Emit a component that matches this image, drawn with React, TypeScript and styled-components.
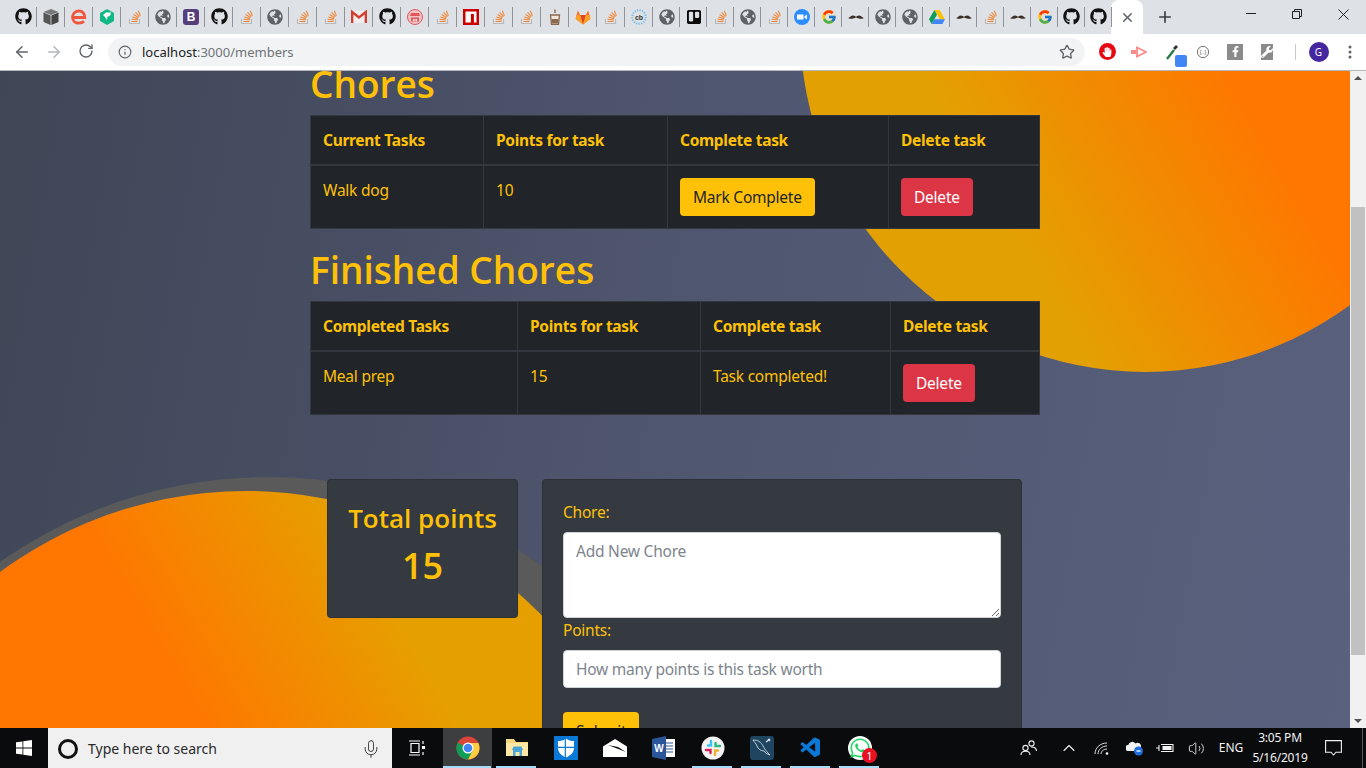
import React from 'react';
import styled, { createGlobalStyle } from 'styled-components';
import {
  ArrowLeft,
  ArrowRight,
  ChevronUp,
  Info,
  Mic,
  Plus,
  RotateCw,
  Star,
  Volume2,
  X,
} from 'lucide-react';
import { FaGithub, FaTrello, FaGlobeAmericas, FaWhatsapp, FaWrench, FaFacebookF, FaHandPaper } from 'react-icons/fa';
import { FcGoogle } from 'react-icons/fc';
import { VscVscode } from 'react-icons/vsc';

const UI_FONT = `"Noto Sans", "Open Sans", sans-serif`;

const GlobalStyle = createGlobalStyle`
  html, body {
    margin: 0;
    padding: 0;
    height: 100%;
    overflow: hidden;
  }
  * {
    box-sizing: border-box;
  }
  body {
    font-family: ${UI_FONT};
    font-size: 16px;
    line-height: 24px;
  }
`;

const Screen = styled.div`
  width: 1366px;
  height: 768px;
  display: flex;
  flex-direction: column;
  overflow: hidden;
`;

/* browser chrome */
const TabStrip = styled.div`
  height: 34px;
  flex: none;
  display: flex;
  background: #dee1e6;
  padding-left: 9px;
`;
const PinnedTab = styled.div<{ $w: number }>`
  width: ${(p) => p.$w}px;
  height: 34px;
  flex: none;
  display: flex;
  align-items: center;
  justify-content: center;
  padding-bottom: 1px;
  position: relative;
  color: #24292e;
  &::after {
    content: '';
    position: absolute;
    right: 0;
    top: 7px;
    height: 20px;
    width: 1px;
    background: #8f9399;
  }
`;
const ActiveTab = styled.div`
  width: 32px;
  height: 34px;
  flex: none;
  margin-left: -1px;
  background: #fff;
  border-radius: 8px 8px 0 0;
  display: flex;
  align-items: center;
  justify-content: center;
  color: #5f6368;
`;
const NewTab = styled.div`
  width: 44px;
  display: flex;
  align-items: center;
  justify-content: center;
  color: #3c4043;
`;
const WindowControls = styled.div`
  margin-left: auto;
  display: flex;
`;
const WindowButton = styled.div`
  width: 46px;
  height: 28px;
  display: flex;
  align-items: center;
  justify-content: center;
  color: #202124;
`;
const Toolbar = styled.div`
  height: 37px;
  flex: none;
  background: #fff;
  border-bottom: 1px solid #b6b7b9;
  display: flex;
  align-items: center;
  padding-bottom: 1px;
`;
const NavButton = styled.div<{ $muted?: boolean }>`
  width: 32px;
  display: flex;
  justify-content: center;
  color: ${(p) => (p.$muted ? '#b4b6b9' : '#5f6368')};
`;
const NavGroup = styled.div`
  width: 108px;
  padding-left: 6px;
  display: flex;
  flex: none;
`;
const Omnibox = styled.div`
  width: 977px;
  height: 28px;
  flex: none;
  border-radius: 14px;
  background: #f1f3f4;
  display: flex;
  align-items: center;
  padding: 0 10px;
  color: #5f6368;
  font-size: 13px;
`;
const UrlText = styled.span`
  margin-left: 10px;
  color: #6f7478;
  b {
    font-weight: 400;
    color: #202124;
  }
`;
const StarSlot = styled.div`
  margin-left: auto;
  display: flex;
`;
const Extensions = styled.div`
  flex: 1;
  display: flex;
  align-items: center;
`;
const Extension = styled.div<{ $w: number }>`
  width: ${(p) => p.$w}px;
  flex: none;
  display: flex;
  justify-content: center;
  align-items: center;
  position: relative;
`;
const ExtDivider = styled.div`
  width: 1px;
  height: 16px;
  background: #c8c9cb;
  flex: none;
`;
const ProfileBadge = styled.div`
  width: 20px;
  height: 20px;
  border-radius: 50%;
  background: #4527a0;
  color: #fff;
  font-size: 10px;
  line-height: 20px;
  text-align: center;
`;
const Dot = styled.span`
  position: absolute;
  right: 10px;
  bottom: -6px;
  width: 12px;
  height: 12px;
  border-radius: 2px;
  background: #4285f4;
`;
const RoundStop = styled.div`
  width: 17px;
  height: 17px;
  border-radius: 50%;
  background: #e50914;
  color: #fff;
  display: flex;
  align-items: center;
  justify-content: center;
`;
const GreySquare = styled.div`
  width: 16px;
  height: 16px;
  background: #8a8a8a;
  color: #fff;
  display: flex;
  align-items: center;
  justify-content: center;
`;

/* page */
const Viewport = styled.div`
  flex: 1;
  min-height: 0;
  display: flex;
`;
const Page = styled.div`
  flex: 1;
  position: relative;
  overflow: hidden;
  background: linear-gradient(100deg, #3f4656 0%, #4f566f 50%, #5a617e 100%);
`;
const Disc = styled.div`
  position: absolute;
  border-radius: 50%;
`;
const SunDisc = styled(Disc)`
  left: 800px;
  top: -390px;
  width: 691px;
  height: 691px;
  background: linear-gradient(60deg, #e3a002 27%, #ff7600 56%);
`;
const RingDisc = styled(Disc)`
  left: -197px;
  top: 406px;
  width: 930px;
  height: 930px;
  background: #5a5a5a;
`;
const OrangeDisc = styled(Disc)`
  left: -168px;
  top: 420px;
  width: 828px;
  height: 828px;
  background: linear-gradient(60deg, #ff7600 54%, #e5a000 75%);
`;
const Main = styled.main`
  position: relative;
  width: 730px;
  margin: -12px auto 0;
  font-size: 15.5px;
  letter-spacing: -0.23px;
`;
const Heading = styled.h1`
  margin: 0 0 8px;
  padding-top: 2px;
  font-family: 'Open Sans', sans-serif;
  font-size: 37px;
  line-height: 46px;
  font-weight: 600;
  letter-spacing: 0;
  color: #ffc107;
`;
const ChoreTable = styled.table`
  width: 729px;
  border-collapse: collapse;
  table-layout: fixed;
  background: #212529;
  color: #ffc107;
  margin-bottom: 16px;
  th,
  td {
    padding: 12px;
    border: 1px solid #32383e;
    text-align: left;
    vertical-align: top;
  }
  th {
    font-weight: 700;
    letter-spacing: -0.3px;
    vertical-align: bottom;
    border-bottom-width: 2px;
  }
`;
const Btn = styled.button<{ $kind: 'warning' | 'danger' }>`
  display: inline-block;
  height: 38px;
  padding: 6px 12px;
  border: 1px solid transparent;
  border-radius: 4px;
  font: inherit;
  letter-spacing: inherit;
  background: ${(p) => (p.$kind === 'warning' ? '#ffc107' : '#dc3545')};
  color: ${(p) => (p.$kind === 'warning' ? '#212529' : '#fff')};
`;
const CardRow = styled.div`
  margin-top: 64px;
  padding-right: 1px;
  display: flex;
  justify-content: center;
  align-items: flex-start;
  gap: 24px;
`;
const Card = styled.div`
  background: #343a40;
  border: 1px solid rgba(0, 0, 0, 0.125);
  border-radius: 4px;
  padding: 20px;
  color: #ffc107;
`;
const PointsCard = styled(Card)`
  width: 191px;
  height: 139px;
  text-align: center;
`;
const PointsTitle = styled.h3`
  margin: 0 0 8px;
  padding-top: 2px;
  font-family: 'Open Sans', sans-serif;
  font-size: 26px;
  line-height: 32px;
  font-weight: 600;
  letter-spacing: 0;
  white-space: nowrap;
`;
const PointsValue = styled.h1`
  margin: 0;
  font-family: 'Open Sans', sans-serif;
  font-size: 36px;
  line-height: 48px;
  font-weight: 600;
  letter-spacing: 0;
`;
const FormCard = styled(Card)`
  width: 480px;
  height: 400px;
`;
const FieldLabel = styled.label`
  display: block;
  margin-bottom: 8px;
`;
const ChoreArea = styled.textarea`
  display: block;
  width: 100%;
  height: 86px;
  padding: 6px 12px;
  border: 1px solid #ced4da;
  border-radius: 4px;
  font: inherit;
  letter-spacing: inherit;
  background: #fff;
  &::placeholder {
    color: #7d858d;
    opacity: 1;
  }
`;
const PointsInput = styled.input`
  display: block;
  width: 100%;
  height: 38px;
  padding: 6px 12px;
  border: 1px solid #ced4da;
  border-radius: 4px;
  font: inherit;
  letter-spacing: inherit;
  background: #fff;
  margin-bottom: 24px;
  &::placeholder {
    color: #7d858d;
    opacity: 1;
  }
`;

const Scrollbar = styled.div`
  width: 16px;
  flex: none;
  background: #f1f1f1;
  position: relative;
`;
const ScrollThumb = styled.div`
  position: absolute;
  left: 1px;
  right: 1px;
  top: 136px;
  height: 448px;
  background: #c1c1c1;
`;
const ScrollArrow = styled.div<{ $down?: boolean }>`
  position: absolute;
  left: 4px;
  ${(p) => (p.$down ? 'bottom: 5px;' : 'top: 5px;')}
  width: 0;
  height: 0;
  border-left: 4px solid transparent;
  border-right: 4px solid transparent;
  ${(p) => (p.$down ? 'border-top: 4px solid #505050;' : 'border-bottom: 4px solid #505050;')}
`;

/* windows taskbar */
const Taskbar = styled.div`
  height: 40px;
  flex: none;
  display: flex;
  background: #0a0b0d;
  color: #fff;
`;
const StartButton = styled.div`
  width: 48px;
  display: flex;
  align-items: center;
  justify-content: center;
`;
const SearchBox = styled.div`
  width: 344px;
  background: #f0f0f0;
  color: #2a2a2a;
  display: flex;
  align-items: center;
  font-size: 14px;
  padding: 1px 10px 0;
`;
const Cortana = styled.div`
  width: 20px;
  height: 20px;
  border-radius: 50%;
  border: 3px solid #111;
  margin-right: 10px;
`;
const MicSlot = styled.div`
  margin-left: auto;
  margin-right: 1px;
  display: flex;
  color: #333;
`;
const TaskView = styled.div`
  width: 51px;
  display: flex;
  align-items: center;
  justify-content: center;
`;
const AppCell = styled.div<{ $active?: boolean; $running?: boolean }>`
  width: 49px;
  display: flex;
  align-items: center;
  justify-content: center;
  position: relative;
  background: ${(p) => (p.$active ? '#3d3e40' : 'transparent')};
  &::after {
    content: '';
    position: absolute;
    left: ${(p) => (p.$active ? '0' : '4px')};
    right: ${(p) => (p.$active ? '1px' : '5px')};
    bottom: 0;
    height: 2px;
    background: ${(p) => (p.$running ? '#a6dcfa' : 'transparent')};
  }
`;
const WhatsAppTile = styled.div`
  width: 24px;
  height: 24px;
  border-radius: 50%;
  background: #fff;
  color: #25d366;
  display: flex;
  align-items: center;
  justify-content: center;
`;
const Badge = styled.span`
  position: absolute;
  right: 7px;
  bottom: 5px;
  width: 15px;
  height: 15px;
  border-radius: 50%;
  background: #e81123;
  color: #fff;
  font-size: 11px;
  line-height: 15px;
  text-align: center;
`;
const Tray = styled.div`
  margin-left: auto;
  display: flex;
`;
const TrayItem = styled.div<{ $w: number }>`
  width: ${(p) => p.$w}px;
  display: flex;
  align-items: center;
  justify-content: center;
  font-size: 12px;
  color: #f2f2f2;
`;
const Clock = styled.div`
  text-align: center;
  line-height: 20px;
  font-size: 12px;
  letter-spacing: -0.2px;
`;
const ShowDesktop = styled.div`
  width: 14px;
  position: relative;
  &::after {
    content: '';
    position: absolute;
    left: 10px;
    top: 0;
    bottom: 0;
    width: 1px;
    background: #5a5a5a;
  }
`;

/* favicons */
const StackIcon = () => (
  <svg width="16" height="16" viewBox="0 0 16 16" fill="none">
    <path d="M2.500 10v4.500h10V10" stroke="#bcbbbb" strokeWidth="1.200" />
    <path
      d="M4.500 12.500h6M4.700 10.300l5.900.6M5.300 8l5.700 1.600M6.600 5.600l5 2.900M8.600 3.400l3.900 4.200M11.200 1.600l2.200 5.200"
      stroke="#f0893a"
      strokeWidth="1.100"
    />
  </svg>
);
const CubeIcon = () => (
  <svg width="16" height="16" viewBox="0 0 16 16">
    <path d="M8 0l7.500 3L8 6 .5 3z" fill="#777" />
    <path d="M.5 3.600L7.600 6.600V16L.5 13z" fill="#555" />
    <path d="M15.500 3.600L8.400 6.600V16l7.100-3z" fill="#444" />
  </svg>
);
const EIcon = () => (
  <svg width="16" height="16" viewBox="0 0 16 16" fill="none">
    <path d="M1.500 8.500h12.300C13.800 4.500 11.300 2 8 2 4.500 2 1.500 4.500 1.500 8.200c0 3.700 2.900 6 6.500 6 2 0 3.800-.7 5-1.900" stroke="#f1553b" strokeWidth="2.800" />
  </svg>
);
const HexIcon = () => (
  <svg width="16" height="16" viewBox="0 0 16 16">
    <path d="M8 0l7 4v8l-7 4-7-4V4z" fill="#12b886" />
    <path d="M4 6l3-2.500h5L11 7 8.500 7.500 8 11 6 8z" fill="#fff" />
  </svg>
);
const BootstrapTile = styled.div`
  width: 16px;
  height: 16px;
  border-radius: 3px;
  background: #563d7c;
  color: #fff;
  font: 700 12px/16px 'Liberation Sans', sans-serif;
  text-align: center;
`;
const GmailIcon = () => (
  <svg width="16" height="16" viewBox="0 0 16 16" fill="none">
    <path d="M0 2h16v12H0z" fill="#eee" />
    <path d="M1.200 14V3L8 8.500 14.800 3v11" stroke="#d23f31" strokeWidth="2.400" />
  </svg>
);
const TempleIcon = () => (
  <svg width="16" height="16" viewBox="0 0 16 16" fill="none">
    <circle cx="8" cy="8" r="7.500" fill="#f2c4c4" stroke="#e0575c" />
    <path d="M4 4h8l1 3H3zM4 8.500h8v4H4z" fill="#e0575c" />
    <path d="M6 10h1.500v2H6zM8.500 10H10v2H8.500z" fill="#fff" />
  </svg>
);
const NpmIcon = () => (
  <svg width="16" height="16" viewBox="0 0 16 16">
    <path d="M0 0h16v16H0z" fill="#cb0000" />
    <path d="M2.500 2.500h11v11h-2.600V5h-3v8.500H2.500z" fill="#fff" />
  </svg>
);
const CupIcon = () => (
  <svg width="16" height="16" viewBox="0 0 16 16" fill="none">
    <path d="M3.500 6h9l-1 9.500h-7z" fill="#f3e6d8" stroke="#8a6a50" strokeWidth="1.300" />
    <path d="M4.500 10h7l-.5 4.500H5z" fill="#8a6a50" />
    <path d="M8 .5v3.500" stroke="#8a6a50" strokeWidth="1.400" />
  </svg>
);
const GitlabIcon = () => (
  <svg width="16" height="16" viewBox="0 0 16 16">
    <path d="M8 15.500L.5 9.800 2.800 1.500 5.200 6h5.600l2.400-4.500 2.300 8.300z" fill="#fc6d26" />
    <path d="M8 15.500L5.200 6h5.600z" fill="#e24329" />
    <path d="M.5 9.800L8 15.500 5.200 6H2z" fill="#fca326" />
    <path d="M15.500 9.800L8 15.500 10.800 6H14z" fill="#fca326" />
  </svg>
);
const CbIcon = () => (
  <svg width="16" height="16" viewBox="0 0 16 16" fill="none">
    <circle cx="8" cy="8" r="6.800" stroke="#57b5ea" strokeWidth="2" strokeDasharray="1 1.500" />
    <text x="8" y="10.500" fontSize="7" fontWeight="700" textAnchor="middle" fill="#333" fontFamily="Liberation Sans">cb</text>
  </svg>
);
const ZoomIcon = () => (
  <svg width="16" height="16" viewBox="0 0 16 16">
    <circle cx="8" cy="8" r="8" fill="#2d8cff" />
    <path d="M3 5.500h6.500v5H3zM10.300 7.500l2.700-2v5l-2.700-2z" fill="#fff" />
  </svg>
);
const MustacheIcon = () => (
  <svg width="16" height="16" viewBox="0 0 16 16">
    <path d="M0 9c2-.5 3-2.500 5-2.500 1.400 0 2.300.8 3 1.300.7-.5 1.600-1.300 3-1.300 2 0 3 2 5 2.500-2 1-3.500 1-5 .6-1.300-.4-2.300-.9-3-1.100-.7.2-1.700.7-3 1.100-1.500.4-3 .4-5-.6z" fill="#3b2f25" />
  </svg>
);
const DriveIcon = () => (
  <svg width="16" height="16" viewBox="0 0 16 16">
    <path d="M5.400 1h5.200l5.400 9.300h-5.200z" fill="#ffc107" />
    <path d="M5.400 1L0 10.300l2.600 4.700L8 5.700z" fill="#0f9d58" />
    <path d="M2.600 15h10.800l2.600-4.700H5.300z" fill="#4285f4" />
  </svg>
);

type Favicon = 'gh' | 'so' | 'globe' | 'cube' | 'e' | 'hex' | 'bs' | 'gmail' | 'temple' | 'npm' | 'cup' | 'gitlab' | 'cb' | 'trello' | 'zoom' | 'google' | 'stache' | 'drive';

const favicons: Favicon[] = [
  'gh', 'cube', 'e', 'hex', 'so', 'globe', 'bs', 'gh', 'so', 'globe',
  'so', 'so', 'gmail', 'gh', 'temple', 'so', 'npm', 'so', 'so', 'cup',
  'gitlab', 'so', 'cb', 'globe', 'trello', 'so', 'globe', 'so', 'zoom', 'google',
  'stache', 'globe', 'globe', 'drive', 'stache', 'so', 'stache', 'google', 'gh', 'gh',
];

function renderFavicon(kind: Favicon) {
  switch (kind) {
    case 'gh':
      return <FaGithub size={17} color="#111" />;
    case 'so':
      return <StackIcon />;
    case 'globe':
      return <FaGlobeAmericas size={16} color="#5f6368" />;
    case 'cube':
      return <CubeIcon />;
    case 'e':
      return <EIcon />;
    case 'hex':
      return <HexIcon />;
    case 'bs':
      return <BootstrapTile>B</BootstrapTile>;
    case 'gmail':
      return <GmailIcon />;
    case 'temple':
      return <TempleIcon />;
    case 'npm':
      return <NpmIcon />;
    case 'cup':
      return <CupIcon />;
    case 'gitlab':
      return <GitlabIcon />;
    case 'cb':
      return <CbIcon />;
    case 'trello':
      return <FaTrello size={16} color="#0a0a0a" />;
    case 'zoom':
      return <ZoomIcon />;
    case 'google':
      return <FcGoogle size={16} />;
    case 'stache':
      return <MustacheIcon />;
    case 'drive':
      return <DriveIcon />;
  }
}

/* taskbar apps */
const WindowsLogo = () => (
  <svg width="16" height="16" viewBox="0 0 16 16" fill="#fff">
    <path d="M0 2.300l6.500-.9v6.200H0zM7.300 1.300L16 0v7.600H7.300zM0 8.400h6.500v6.200L0 13.700zM7.300 8.400H16V16l-8.700-1.300z" />
  </svg>
);
const TaskViewIcon = () => (
  <svg width="20" height="16" viewBox="0 0 20 16" fill="none" stroke="#fff" strokeWidth="1.200">
    <path d="M1 1h11M1 15h11M3 3.500h8v9H3zM15 1v3M15 12v3" />
    <path d="M14.500 6.500h2v2h-2z" fill="#fff" />
  </svg>
);
const ChromeIcon = () => (
  <svg width="24" height="24" viewBox="0 0 24 24">
    <circle cx="12" cy="12" r="11.500" fill="#db4437" />
    <path d="M12 12L1.800 6.500A11.500 11.500 0 0 0 12 23.500l5.500-9z" fill="#0f9d58" />
    <path d="M12 7h10.400A11.500 11.500 0 0 1 12 23.500L17 14z" fill="#ffcd40" />
    <circle cx="12" cy="12" r="5.500" fill="#fff" />
    <circle cx="12" cy="12" r="4.300" fill="#4285f4" />
  </svg>
);
const FolderIcon = () => (
  <svg width="24" height="22" viewBox="0 0 24 22">
    <path d="M1 2h8l2 3h12v14H1z" fill="#f6d77d" />
    <path d="M1 6h22v13H1z" fill="#fbe8a4" />
    <path d="M7 13h11l-1.500-3.500h-8zM8 13h9v6H8z" fill="#4aa4d8" />
    <path d="M10.500 15h4v4h-4z" fill="#fbe8a4" />
  </svg>
);
const ShieldIcon = () => (
  <svg width="24" height="24" viewBox="0 0 24 24">
    <path d="M0 0h24v24H0z" fill="#0a78d7" />
    <path d="M12 2.500c2.500 2 5 2.500 8 2.500v7c0 4.500-3.500 7.500-8 9.500-4.500-2-8-5-8-9.500V5c3 0 5.500-.5 8-2.500z" fill="#fff" />
    <path d="M11.300 2v20M3 11.400h18" stroke="#0a78d7" strokeWidth="1.200" />
  </svg>
);
const MailIcon = () => (
  <svg width="24" height="18" viewBox="0 0 24 18">
    <path d="M0 7.500L12 0l12 7.500V18H0z" fill="#fff" />
    <path d="M5 6l18 7-8-5z" fill="#0a0b0d" />
  </svg>
);
const WordIcon = () => (
  <svg width="24" height="24" viewBox="0 0 24 24">
    <path d="M11 3h12v18H11z" fill="#fff" />
    <path d="M14 7h7M14 10h7M14 13h7M14 16h7" stroke="#2b579a" strokeWidth="1.200" />
    <path d="M0 3l14-3v24L0 21z" fill="#2b579a" />
    <text x="7" y="15.500" fontSize="10" fontWeight="700" textAnchor="middle" fill="#fff" fontFamily="Liberation Sans">W</text>
  </svg>
);
const SlackIcon = () => (
  <svg width="24" height="24" viewBox="0 0 24 24" fill="none">
    <circle cx="12" cy="12" r="11.500" fill="#f4f4f4" />
    <path d="M10 5v4.500H7" stroke="#36c5f0" strokeWidth="2.400" strokeLinecap="round" />
    <path d="M19 10h-4.500V7" stroke="#2eb67d" strokeWidth="2.400" strokeLinecap="round" />
    <path d="M14 19v-4.500h3" stroke="#ecb22e" strokeWidth="2.400" strokeLinecap="round" />
    <path d="M5 14h4.500v3" stroke="#e01e5a" strokeWidth="2.400" strokeLinecap="round" />
  </svg>
);
const MysqlIcon = () => (
  <svg width="24" height="24" viewBox="0 0 24 24" fill="none">
    <rect width="24" height="24" rx="3" fill="#1f4561" />
    <path d="M3 4c5 0 8 2 10 6s4 6 7 9c-3-1-5-2-6-4-3 0-6-2-7-5S4 6 3 4z" stroke="#cfd9e2" strokeWidth="0.900" />
    <path d="M16 6l4-3M18 3l2 2" stroke="#dfe6ec" strokeWidth="1.300" />
  </svg>
);
const WifiIcon = () => (
  <svg width="18" height="16" viewBox="0 0 18 16" fill="none" stroke="#ddd" strokeWidth="1">
    <path d="M1 14C1 8 6 3 13 3M4 14c0-4.500 4-8 9-8M7 14c0-3 3-5 6-5" />
    <circle cx="13" cy="13.500" r="1.300" fill="#fff" stroke="none" />
  </svg>
);
const PeopleIcon = () => (
  <svg width="18" height="16" viewBox="0 0 18 16" fill="none" stroke="#eee" strokeWidth="1.100">
    <circle cx="5.500" cy="8" r="2.600" />
    <path d="M1 15c0-2.500 2-3.800 4.500-3.800S10 12.500 10 15" />
    <circle cx="11.500" cy="3.500" r="2.600" />
    <path d="M11 7c2.800-.2 5.500 1 5.500 4" />
  </svg>
);
const CloudIcon = () => (
  <svg width="18" height="16" viewBox="0 0 18 16">
    <path d="M2 11a3 3 0 0 1 .3-6A4 4 0 0 1 9.500 3.500 3.500 3.500 0 0 1 15 7v4z" fill="#f2f2f2" />
    <circle cx="12.500" cy="11" r="4.500" fill="#1e6fd9" />
    <path d="M10.500 11h4" stroke="#fff" strokeWidth="1.300" />
  </svg>
);
const PowerIcon = () => (
  <svg width="18" height="12" viewBox="0 0 18 12" fill="none" stroke="#f2f2f2" strokeWidth="1.100">
    <path d="M5 2.500h12v7H5M0 6h3M3 3v6" />
    <path d="M6.500 4h9v4h-9z" fill="#f2f2f2" stroke="none" />
  </svg>
);
const ActionCenterIcon = () => (
  <svg width="17" height="16" viewBox="0 0 17 16" fill="none" stroke="#f2f2f2" strokeWidth="1.100">
    <path d="M.6.600h15.800v11.600h-5.400l-2.500 2.800-2.500-2.800H.6z" />
  </svg>
);

const currentTasks = [{ name: 'Walk dog', points: 10 }];
const finishedTasks = [{ name: 'Meal prep', points: 15 }];

function App() {
  return (
    <Screen>
      <GlobalStyle />
      <TabStrip>
        {favicons.map((kind, i) => (
          <PinnedTab key={i} $w={i < 23 ? 28 : 27}>
            {renderFavicon(kind)}
          </PinnedTab>
        ))}
        <ActiveTab>
          <X size={15} strokeWidth={2.4} />
        </ActiveTab>
        <NewTab>
          <Plus size={18} strokeWidth={2.2} />
        </NewTab>
        <WindowControls>
          <WindowButton>
            <svg width="10" height="10" viewBox="0 0 10 10" stroke="#202124" fill="none">
              <path d="M0 4.500h10" />
            </svg>
          </WindowButton>
          <WindowButton>
            <svg width="10" height="10" viewBox="0 0 10 10" stroke="#202124" fill="none">
              <path d="M.5 2.500h7v7h-7zM2.500 2.500v-2h7v7h-2" />
            </svg>
          </WindowButton>
          <WindowButton>
            <svg width="11" height="11" viewBox="0 0 11 11" stroke="#202124" fill="none">
              <path d="M.5.500l10 10M10.500.500l-10 10" />
            </svg>
          </WindowButton>
        </WindowControls>
      </TabStrip>
      <Toolbar>
        <NavGroup>
          <NavButton>
            <ArrowLeft size={18} />
          </NavButton>
          <NavButton $muted>
            <ArrowRight size={18} />
          </NavButton>
          <NavButton>
            <RotateCw size={16} />
          </NavButton>
        </NavGroup>
        <Omnibox>
          <Info size={14} />
          <UrlText>
            <b>localhost</b>:3000/members
          </UrlText>
          <StarSlot>
            <Star size={16} />
          </StarSlot>
        </Omnibox>
        <Extensions>
          <Extension $w={44}>
            <RoundStop>
              <FaHandPaper size={10} />
            </RoundStop>
          </Extension>
          <Extension $w={20}>
            <svg width="16" height="12" viewBox="0 0 16 12" fill="none" stroke="#f98a8a" strokeWidth="1.800">
              <path d="M6 1.500L15 6 6 10.500z" />
              <path d="M0 4h5v4H0z" fill="#f98a8a" stroke="none" />
            </svg>
          </Extension>
          <Extension $w={48}>
            <svg width="16" height="18" viewBox="0 0 16 18" fill="none">
              <path d="M2 16L9 7" stroke="#2c7a4a" strokeWidth="2.400" />
              <path d="M8 5l3-3 2 2-3 3z" fill="#333" />
            </svg>
            <Dot />
          </Extension>
          <Extension $w={12}>
            <svg width="16" height="16" viewBox="0 0 16 16" fill="none" stroke="#444">
              <circle cx="8" cy="8" r="7.500" />
              <text x="8" y="10.500" fontSize="7" textAnchor="middle" fill="#444" stroke="none" fontFamily="Liberation Sans">{'{..}'}</text>
            </svg>
          </Extension>
          <Extension $w={52}>
            <GreySquare>
              <FaFacebookF size={11} />
            </GreySquare>
          </Extension>
          <Extension $w={12}>
            <GreySquare>
              <FaWrench size={12} />
            </GreySquare>
          </Extension>
          <Extension $w={22} />
          <ExtDivider />
          <Extension $w={45}>
            <ProfileBadge>G</ProfileBadge>
          </Extension>
          <Extension $w={18}>
            <svg width="4" height="14" viewBox="0 0 4 14" fill="#5f6368">
              <circle cx="2" cy="2" r="1.500" />
              <circle cx="2" cy="7" r="1.500" />
              <circle cx="2" cy="12" r="1.500" />
            </svg>
          </Extension>
        </Extensions>
      </Toolbar>
      <Viewport>
        <Page>
          <SunDisc />
          <RingDisc />
          <OrangeDisc />
          <Main>
            <Heading>Chores</Heading>
            <ChoreTable>
              <colgroup>
                <col width="173" />
                <col width="184" />
                <col width="221" />
                <col width="151" />
              </colgroup>
              <thead>
                <tr>
                  <th>Current Tasks</th>
                  <th>Points for task</th>
                  <th>Complete task</th>
                  <th>Delete task</th>
                </tr>
              </thead>
              <tbody>
                {currentTasks.map((task) => (
                  <tr key={task.name}>
                    <td>{task.name}</td>
                    <td>{task.points}</td>
                    <td>
                      <Btn $kind="warning">Mark Complete</Btn>
                    </td>
                    <td>
                      <Btn $kind="danger">Delete</Btn>
                    </td>
                  </tr>
                ))}
              </tbody>
            </ChoreTable>
            <Heading>Finished Chores</Heading>
            <ChoreTable>
              <colgroup>
                <col width="207" />
                <col width="183" />
                <col width="190" />
                <col width="149" />
              </colgroup>
              <thead>
                <tr>
                  <th>Completed Tasks</th>
                  <th>Points for task</th>
                  <th>Complete task</th>
                  <th>Delete task</th>
                </tr>
              </thead>
              <tbody>
                {finishedTasks.map((task) => (
                  <tr key={task.name}>
                    <td>{task.name}</td>
                    <td>{task.points}</td>
                    <td>Task completed!</td>
                    <td>
                      <Btn $kind="danger">Delete</Btn>
                    </td>
                  </tr>
                ))}
              </tbody>
            </ChoreTable>
            <CardRow>
              <PointsCard>
                <PointsTitle>Total points</PointsTitle>
                <PointsValue>15</PointsValue>
              </PointsCard>
              <FormCard>
                <FieldLabel>Chore:</FieldLabel>
                <ChoreArea placeholder="Add New Chore" />
                <FieldLabel>Points:</FieldLabel>
                <PointsInput placeholder="How many points is this task worth" />
                <Btn $kind="warning">Submit</Btn>
              </FormCard>
            </CardRow>
          </Main>
        </Page>
        <Scrollbar>
          <ScrollArrow />
          <ScrollThumb />
          <ScrollArrow $down />
        </Scrollbar>
      </Viewport>
      <Taskbar>
        <StartButton>
          <WindowsLogo />
        </StartButton>
        <SearchBox>
          <Cortana />
          Type here to search
          <MicSlot>
            <Mic size={20} strokeWidth={1.1} />
          </MicSlot>
        </SearchBox>
        <TaskView>
          <TaskViewIcon />
        </TaskView>
        <AppCell $active $running>
          <ChromeIcon />
        </AppCell>
        <AppCell $running>
          <FolderIcon />
        </AppCell>
        <AppCell>
          <ShieldIcon />
        </AppCell>
        <AppCell>
          <MailIcon />
        </AppCell>
        <AppCell>
          <WordIcon />
        </AppCell>
        <AppCell $running>
          <SlackIcon />
        </AppCell>
        <AppCell $running>
          <MysqlIcon />
        </AppCell>
        <AppCell $running>
          <VscVscode size={24} color="#0a78d7" />
        </AppCell>
        <AppCell $running>
          <WhatsAppTile>
            <FaWhatsapp size={22} />
          </WhatsAppTile>
          <Badge>1</Badge>
        </AppCell>
        <Tray>
          <TrayItem $w={38}>
            <PeopleIcon />
          </TrayItem>
          <TrayItem $w={42}>
            <ChevronUp size={20} strokeWidth={1.3} />
          </TrayItem>
          <TrayItem $w={26}>
            <WifiIcon />
          </TrayItem>
          <TrayItem $w={38}>
            <CloudIcon />
          </TrayItem>
          <TrayItem $w={22}>
            <PowerIcon />
          </TrayItem>
          <TrayItem $w={40}>
            <Volume2 size={17} strokeWidth={1.2} />
          </TrayItem>
          <TrayItem $w={30}>ENG</TrayItem>
          <TrayItem $w={68}>
            <Clock>
              3:05 PM
              <br />
              5/16/2019
            </Clock>
          </TrayItem>
          <TrayItem $w={38}>
            <ActionCenterIcon />
          </TrayItem>
          <ShowDesktop />
        </Tray>
      </Taskbar>
    </Screen>
  );
}

export default App;
